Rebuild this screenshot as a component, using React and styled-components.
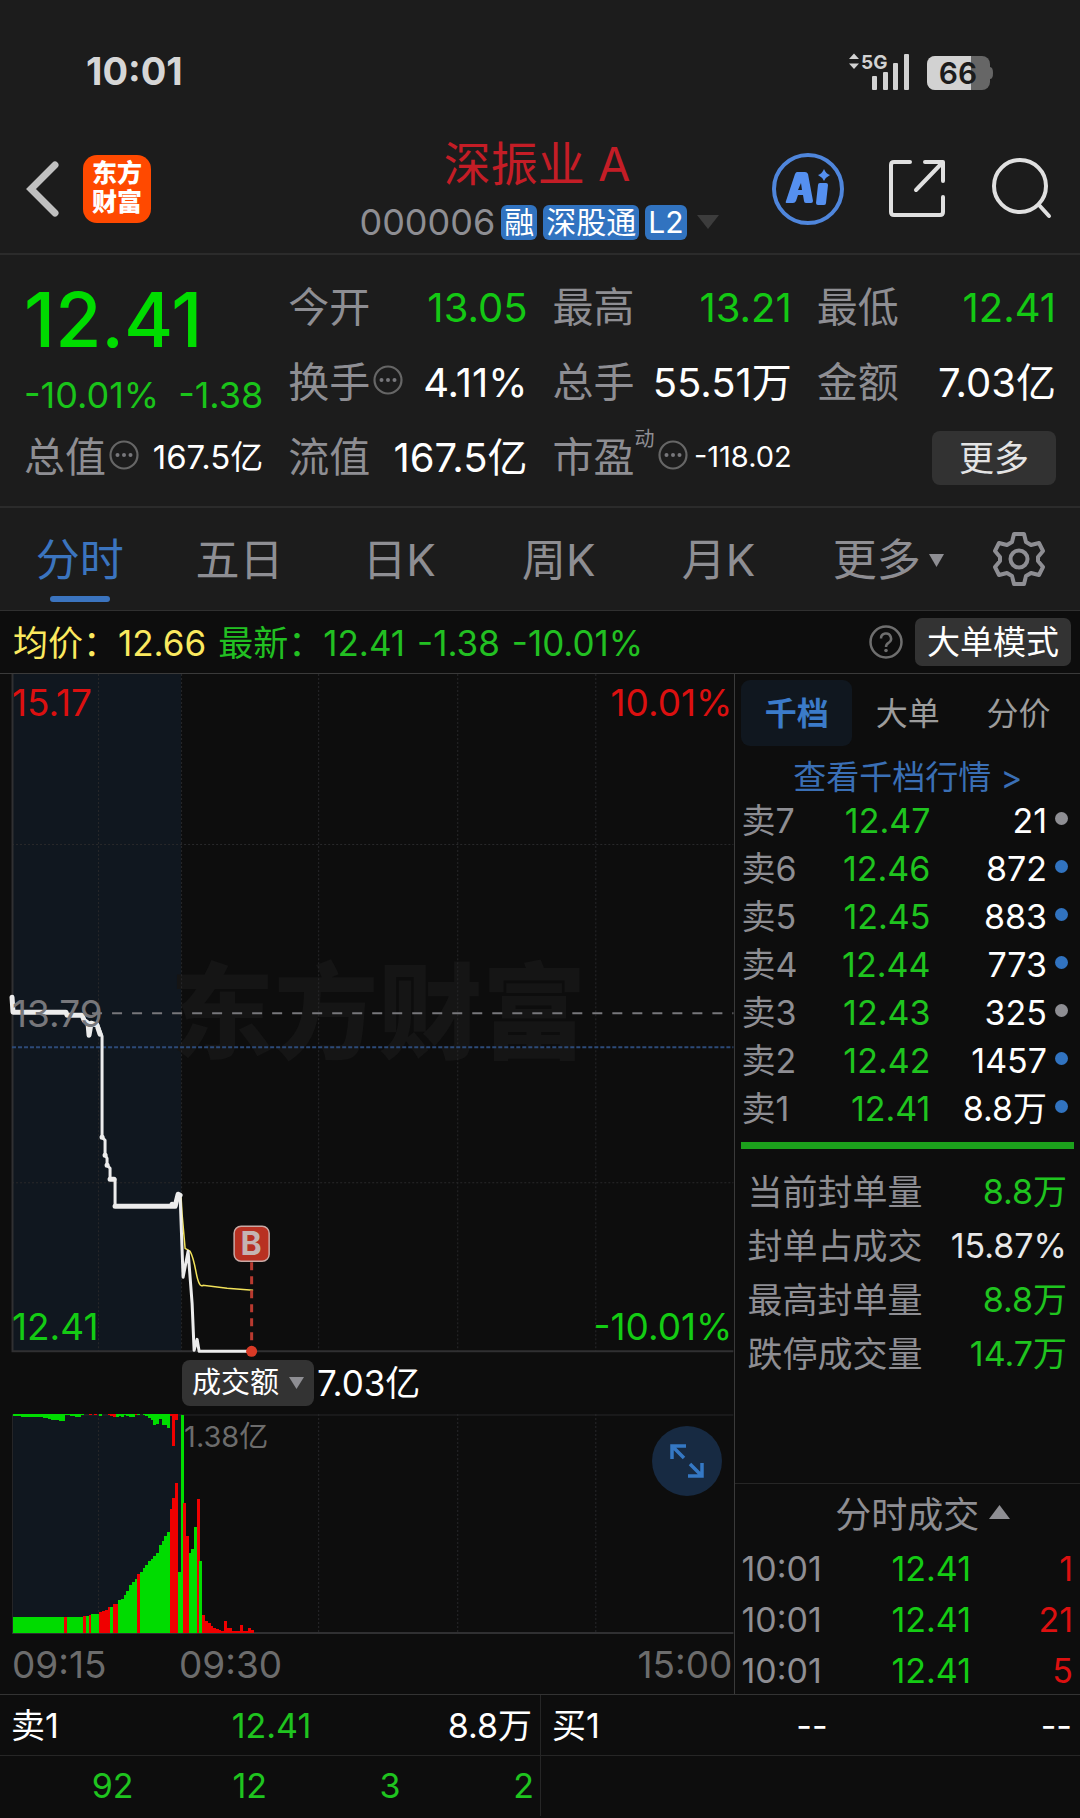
import React, { useState } from "react";
import styled, { createGlobalStyle } from "styled-components";

const asks = [
  { label: "卖7", price: "12.47", qty: "21" },
  { label: "卖6", price: "12.46", qty: "872", big: true },
  { label: "卖5", price: "12.45", qty: "883", big: true },
  { label: "卖4", price: "12.44", qty: "773", big: true },
  { label: "卖3", price: "12.43", qty: "325" },
  { label: "卖2", price: "12.42", qty: "1457", big: true },
  { label: "卖1", price: "12.41", qty: "8.8万", big: true },
];

const stats = [
  { label: "当前封单量", value: "8.8万", color: "#1fc41f" },
  { label: "封单占成交", value: "15.87%", color: "#e8e8e8" },
  { label: "最高封单量", value: "8.8万", color: "#1fc41f" },
  { label: "跌停成交量", value: "14.7万", color: "#1fc41f" },
];

const trades = [
  { time: "10:01", price: "12.41", qty: "1" },
  { time: "10:01", price: "12.41", qty: "21" },
  { time: "10:01", price: "12.41", qty: "5" },
];

// [direction, bar heights]
const volumes = [
  ["down", Array(19).fill(16)],
  ["up", [16]],
  ["down", Array(6).fill(16)],
  ["up", [17]],
  ["down", [17]],
  ["up", [18]],
  ["down", [19, 19, 19]],
  ["up", [21, 22, 23, 26]],
  ["down", [26]],
  ["up", [29, 29]],
  ["down", [33, 34, 38, 42, 48, 51, 54]],
  ["up", [59]],
  ["down", [61, 65, 68, 72, 74, 77, 80, 88, 92, 97, 101]],
  ["up", [124, 135, 150]],
  ["down", [61, 218]],
  ["up", [130, 97]],
  ["down", [80, 84, 106]],
  ["up", [134]],
  ["down", [72]],
  ["up", [18, 12, 10, 7, 5, 4, 3, 2, 12, 5, 5, 2, 2, 2, 8, 2, 2, 5, 3]],
];

const unmatched = [
  ["down", [2, 2, 2, 3, 3, 3, 3, 3, 3, 3, 3, 4, 4, 5, 6, 6, 6, 7, 7]],
  ["down", [1, 1, 2, 2, 3, 3, 1, 0, 0]],
  ["up", [1, 0, 1]],
  ["down", [0, 2, 0, 0]],
  ["up", [1, 2, 3]],
  ["down", [3, 2, 3, 1, 2, 3, 3]],
  ["up", [1]],
  ["down", [1, 0, 1, 2, 4, 6, 11, 10, 5, 11, 11, 14]],
  ["up", [2, 32, 6]],
];

const toBars = (runs) =>
  runs
    .flatMap(([dir, heights]) => heights.map((h) => ({ dir, h })))
    .map((bar, i) => ({ ...bar, x: 13 + i * 2.7 }));

const MoreDots = () => (
  <svg width="30" height="30" viewBox="0 0 30 30" aria-hidden="true">
    <circle cx="15" cy="15" r="13.5" fill="none" stroke="#666" strokeWidth="2.2" />
    <g fill="#77777b">
      <circle cx="8.5" cy="15" r="2" />
      <circle cx="15" cy="15" r="2" />
      <circle cx="21.5" cy="15" r="2" />
    </g>
  </svg>
);

const Triangle = ({ width, height, color, up }) => (
  <svg width={width} height={height} viewBox="0 0 10 10" preserveAspectRatio="none" aria-hidden="true">
    <path d={up ? "M0 10 5 0 10 10Z" : "M0 0H10L5 10Z"} fill={color} />
  </svg>
);

const StatusIcons = () => (
  <svg width="148" height="48" viewBox="0 -4 148 48" role="img" aria-label="5G 66%">
    <g fill="#d2d2d2">
      <path d="M6 1.500 11 7H1ZM6 17 11 11.500H1Z" />
      <text x="13" y="17" fontSize="19" fontWeight="700">5G</text>
      <rect x="24" y="24" width="5" height="14" rx="1" />
      <rect x="35" y="20" width="5" height="18" rx="1" />
      <rect x="45" y="11" width="5" height="27" rx="1" />
      <rect x="56" y="2" width="5" height="36" rx="1" />
    </g>
    <rect x="79" y="4" width="63" height="34" rx="8" fill="#666" />
    <path d="M142 15q3 0 3 6t-3 6Z" fill="#666" />
    <path d="M87 4h36v34H87a8 8 0 0 1-8-8V12a8 8 0 0 1 8-8Z" fill="#d2d2d2" />
    <text x="110" y="32" fontSize="30" fontWeight="600" textAnchor="middle" fill="#1c1c1c">66</text>
  </svg>
);

const PriceChart = () => (
  <ChartSvg viewBox="0 0 734 678" role="img" aria-label="分时走势">
    <rect x="12" y="0" width="169" height="677" fill="#10171f" />
    <text x="170" y="377" fontSize="104" fontWeight="900" fill="#151515">东方财富</text>
    <g stroke="#28282a" strokeDasharray="2 2">
      <path d="M98.500 0V677M181.500 0V677M318.500 0V677M457.500 0V677M595.500 0V677" />
      <path d="M12 170.500H733M12 508.500H733" />
    </g>
    <path d="M12.500 0V677H733" fill="none" stroke="#303032" strokeWidth="2" />
    <path d="M92 339H733" stroke="#77777b" strokeWidth="2" strokeDasharray="10 10" />
    <path d="M12 373H733" stroke="#2c4a78" strokeWidth="2" strokeDasharray="4 2" />
    <path
      d="M181 523 182 540 185 574 190 577Q193 582 196 598T203 611L227 614 253 616"
      fill="none" stroke="#f2e25a" strokeWidth="1.500"
    />
    <g fill="none" stroke="#ececec" strokeLinejoin="round" strokeLinecap="round">
      <path d="M12 323 13 338H66L67 341H82L84 346 88 349 89 361 91 349 97 351 100 360" strokeWidth="5" />
      <path d="M97 349 102 362V463L105 466V481L107 484V491L110 494V505H115V532" strokeWidth="3" />
      <path d="M115 532H175L178 520 180 521" strokeWidth="5" />
      <path d="M102 463h.1M105 481h.1M107 491h.1M110 505h4M172 530h.1" strokeWidth="5" />
      <path d="M180 521 183 603 188 577 192 629 194 676 197 665 199 677H251" strokeWidth="3" />
    </g>
    <path d="M251.500 588V677" stroke="#b83a30" strokeWidth="3" strokeDasharray="8 6" />
    <circle cx="251.500" cy="677" r="5.500" fill="#d93a26" />
    <rect x="234" y="552" width="35" height="35" rx="7" fill="#b83122" stroke="#c9a9a5" strokeWidth="1.500" />
    <text x="251" y="581" fontSize="32" fontWeight="700" textAnchor="middle" fill="#c4b4b2">B</text>
    <g fontSize="37">
      <text x="12" y="42" fill="#dc1010">15.17</text>
      <text x="732" y="42" fill="#dc1010" textAnchor="end">10.01%</text>
      <text x="12" y="353" fill="#77777b">13.79</text>
      <text x="12" y="666" fill="#14cc14">12.41</text>
      <text x="732" y="666" fill="#14cc14" textAnchor="end">-10.01%</text>
    </g>
  </ChartSvg>
);

const VolumeChart = () => (
  <ChartSvg viewBox="0 0 734 220" role="img" aria-label="成交额">
    <rect x="12" y="0" width="169" height="219" fill="#10171f" />
    <path
      d="M98.500 0V219M181.500 0V219M318.500 0V219M457.500 0V219M595.500 0V219"
      stroke="#28282a" strokeDasharray="2 2"
    />
    <path d="M12.500 219V1H733" fill="none" stroke="#262628" />
    <path d="M12 219H733" stroke="#303032" strokeWidth="2" />
    <g shapeRendering="crispEdges">
      {toBars(volumes).map((bar) => (
        <rect key={bar.x} x={bar.x} y={219 - bar.h} width="3" height={bar.h} fill={bar.dir === "up" ? "#f00000" : "#00dc00"} />
      ))}
      {toBars(unmatched).map((bar) => (
        <rect key={bar.x} x={bar.x} y="0" width="3" height={bar.h} fill={bar.dir === "up" ? "#f00000" : "#00dc00"} />
      ))}
    </g>
    <text x="184" y="33" fontSize="29" fill="#6c6c6c">1.38亿</text>
  </ChartSvg>
);

const periods = ["分时", "五日", "日K", "周K", "月K"];

function App() {
  const [period, setPeriod] = useState("分时");
  const [book, setBook] = useState("千档");

  return (
    <Page>
      <GlobalStyle />
      <StatusBar>
        <Clock>10:01</Clock>
        <StatusIcons />
      </StatusBar>

      <Header>
        <HeaderSide>
          <IconButton aria-label="返回">
            <svg width="34" height="56" viewBox="0 0 34 56">
              <path d="M29 4 5 28 29 52" fill="none" stroke="#c0c0c0" strokeWidth="7" strokeLinecap="round" />
            </svg>
          </IconButton>
          <Logo>东方财富</Logo>
        </HeaderSide>
        <TitleBlock>
          <Title>深振业 A</Title>
          <SubTitle>
            <span>000006</span>
            <Badge>融</Badge>
            <Badge>深股通</Badge>
            <Badge>L2</Badge>
            <Triangle width="22" height="14" color="#3c3c3c" />
          </SubTitle>
        </TitleBlock>
        <HeaderSide $end>
          <IconButton aria-label="AI">
            <svg width="72" height="72" viewBox="0 0 72 72">
              <circle cx="36" cy="36" r="34" fill="none" stroke="#4f86dc" strokeWidth="4" />
              <path
                d="M25 19h8q2 0 3 2l5 27q0 2-2 2h-5q-2 0-2-2l-1-6h-5l-2 6q-1 2-3 2h-6q-2 0-1-2l9-27q1-2 2-2Zm4 11-3 7h4l-1-7Z"
                fill="#5590f0" fillRule="evenodd"
              />
              <path d="M48 30h6q2 0 2 2l-2 18q0 2-2 2h-6q-2 0-2-2l2-18q0-2 2-2Z" fill="#5590f0" />
              <path d="M52 16q2 5 6 6-4 2-6 6-2-4-6-6 4-1 6-6Z" fill="#5590f0" />
            </svg>
          </IconButton>
          <IconButton aria-label="分享">
            <svg width="60" height="60" viewBox="0 0 60 60">
              <g fill="none" stroke="#e0e0e0" strokeWidth="4" strokeLinecap="round" strokeLinejoin="round">
                <path d="M22 3H6Q3 3 3 6V53Q3 56 6 56H52Q55 56 55 53V38" />
                <path d="M37 3H55V22M54 4 28 31" />
              </g>
            </svg>
          </IconButton>
          <IconButton aria-label="搜索">
            <svg width="60" height="62" viewBox="0 0 60 62">
              <g fill="none" stroke="#e0e0e0" strokeWidth="4" strokeLinecap="round">
                <circle cx="28" cy="28" r="26" />
                <path d="M47 47 57 58" />
              </g>
            </svg>
          </IconButton>
        </HeaderSide>
      </Header>

      <Quote>
        <PriceBlock>
          <BigPrice>12.41</BigPrice>
          <Change>
            <span>-10.01%</span>
            <span>-1.38</span>
          </Change>
        </PriceBlock>
        <Cell><Label>今开</Label><Value $color="#14c814">13.05</Value></Cell>
        <Cell><Label>最高</Label><Value $color="#14c814">13.21</Value></Cell>
        <Cell><Label>最低</Label><Value $color="#14c814">12.41</Value></Cell>
        <Cell><Label>换手<MoreDots /></Label><Value>4.11%</Value></Cell>
        <Cell><Label>总手</Label><Value>55.51万</Value></Cell>
        <Cell><Label>金额</Label><Value>7.03亿</Value></Cell>
        <Cell><Label>总值<MoreDots /></Label><Value $size={33}>167.5亿</Value></Cell>
        <Cell><Label>流值</Label><Value>167.5亿</Value></Cell>
        <Cell><Label>市盈<Sup>动</Sup><MoreDots /></Label><Value $size={29}>-118.02</Value></Cell>
        <Cell $end><MoreButton>更多</MoreButton></Cell>
      </Quote>

      <Tabs>
        {periods.map((name) => (
          <Tab key={name} $active={name === period} onClick={() => setPeriod(name)}>
            {name}
          </Tab>
        ))}
        <MoreTab>
          更多
          <Triangle width="15" height="13" color="#8e8e93" />
        </MoreTab>
        <GearButton aria-label="设置">
          <svg width="52" height="54" viewBox="0 0 52 54">
            <g fill="none" stroke="#8e8e93" strokeWidth="4" strokeLinejoin="round">
              <path d="M21 2H31L33 10 38 13 46 11 50 19 45 25V29L50 35 46 43 38 41 33 44 31 52H21L19 44 14 41 6 43 2 35 7 29V25L2 19 6 11 14 13 19 10Z" />
              <circle cx="26" cy="27" r="8.500" />
            </g>
          </svg>
        </GearButton>
      </Tabs>

      <InfoStrip>
        <Info $color="#fbe95f">均价：<b>12.66</b></Info>
        <Info $color="#22c022">最新：<b>12.41</b></Info>
        <Info $color="#22c022"><b>-1.38</b></Info>
        <Info $color="#22c022"><b>-10.01%</b></Info>
        <StripActions>
          <IconButton aria-label="帮助">
            <svg width="34" height="34" viewBox="0 0 34 34">
              <circle cx="17" cy="17" r="15.500" fill="none" stroke="#6e6e6e" strokeWidth="2.500" />
              <path d="M12 13.500a5 5 0 1 1 7.500 4.300Q17 19.300 17 22" fill="none" stroke="#6e6e6e" strokeWidth="2.500" />
              <circle cx="17" cy="25.500" r="1.800" fill="#6e6e6e" />
            </svg>
          </IconButton>
          <ModeButton>大单模式</ModeButton>
        </StripActions>
      </InfoStrip>

      <Main>
        <Charts>
          <PriceChart />
          <VolumeHead>
            <VolumeButton>
              成交额
              <Triangle width="15" height="12" color="#8e8e93" />
            </VolumeButton>
            <span>7.03亿</span>
          </VolumeHead>
          <VolumeWrap>
            <VolumeChart />
            <ExpandButton aria-label="全屏">
              <svg width="34" height="34" viewBox="0 0 34 34">
                <path d="M2 15V2H16M2 2 14 14M32 19V32H18M32 32 20 20" fill="none" stroke="#3578c4" strokeWidth="3.500" />
              </svg>
            </ExpandButton>
          </VolumeWrap>
          <TimeAxis>
            <span>09:15</span>
            <span>09:30</span>
            <span>15:00</span>
          </TimeAxis>
        </Charts>

        <Side>
          <BookTabs>
            {["千档", "大单", "分价"].map((name) => (
              <BookTab key={name} $active={name === book} onClick={() => setBook(name)}>
                {name}
              </BookTab>
            ))}
          </BookTabs>
          <BookLink href="#book">查看千档行情 &gt;</BookLink>
          <AskTable>
            <tbody>
              {asks.map((row) => (
                <tr key={row.label}>
                  <th scope="row">{row.label}</th>
                  <td>{row.price}</td>
                  <td>{row.qty}</td>
                  <td><Dot $big={row.big} /></td>
                </tr>
              ))}
            </tbody>
          </AskTable>
          <Ratio />
          <Stats>
            {stats.map((row) => (
              <StatRow key={row.label}>
                <dt>{row.label}</dt>
                <StatValue $color={row.color}>{row.value}</StatValue>
              </StatRow>
            ))}
          </Stats>
          <TradesHead>
            分时成交
            <Triangle width="21" height="14" color="#8e8e93" up />
          </TradesHead>
          <TradeTable>
            <tbody>
              {trades.map((row, index) => (
                <tr key={index}>
                  <td>{row.time}</td>
                  <td>{row.price}</td>
                  <td>{row.qty}</td>
                </tr>
              ))}
            </tbody>
          </TradeTable>
        </Side>
      </Main>

      <Footer>
        <Half>
          <BestRow>
            <span>卖1</span>
            <Green>12.41</Green>
            <span>8.8万</span>
          </BestRow>
          <QueueRow>
            <span>92</span>
            <span>12</span>
            <span>3</span>
            <span>2</span>
          </QueueRow>
        </Half>
        <Half>
          <BestRow>
            <span>买1</span>
            <span>--</span>
            <span>--</span>
          </BestRow>
          <QueueRow />
        </Half>
      </Footer>
    </Page>
  );
}

const GlobalStyle = createGlobalStyle`
  * {
    box-sizing: border-box;
  }
  body {
    margin: 0;
    background: #0d0d0d;
    font-family: Inter, "Noto Sans CJK SC", sans-serif;
    line-height: 1.2;
  }
  button {
    border: 0;
    padding: 0;
    background: none;
    color: inherit;
    font: inherit;
    cursor: pointer;
  }
  svg {
    display: block;
    flex-shrink: 0;
  }
  table {
    border-collapse: collapse;
  }
`;

const Page = styled.div`
  color: #fff;
  background: #1c1c1c;
  white-space: nowrap;
`;

const StatusBar = styled.div`
  display: flex;
  align-items: center;
  justify-content: space-between;
  height: 126px;
  padding: 18px 84px 0 86px;
`;

const Clock = styled.span`
  font-size: 38px;
  font-weight: 700;
  color: #d6d6d6;
`;

const Header = styled.header`
  display: grid;
  grid-template-columns: 1fr auto 1fr;
  align-items: center;
  height: 129px;
  padding: 0 28px 4px 26px;
  border-bottom: 2px solid #2b2b2b;
`;

const HeaderSide = styled.div`
  display: flex;
  align-items: center;
  justify-content: ${({ $end }) => ($end ? "flex-end" : "flex-start")};
  gap: ${({ $end }) => ($end ? "44px" : "23px")};
`;

const IconButton = styled.button`
  display: flex;
`;

const Logo = styled.div`
  width: 68px;
  height: 68px;
  padding: 4px 9px;
  border-radius: 14px;
  background: #ff4900;
  font-size: 25px;
  font-weight: 900;
  line-height: 29px;
  white-space: normal;
`;

const TitleBlock = styled.div`
  padding-top: 9px;
  text-align: center;
`;

const Title = styled.h1`
  margin: 0;
  padding-right: 4px;
  font-size: 47px;
  font-weight: 400;
  line-height: 58px;
  color: #c41d26;
`;

const SubTitle = styled.div`
  display: flex;
  align-items: center;
  gap: 6px;
  font-size: 36px;
  line-height: 58px;
  color: #8e8e93;

  svg {
    margin-left: 4px;
  }
`;

const Badge = styled.span`
  padding: 0 3px;
  border-radius: 6px;
  background: #3173c0;
  color: #fff;
  font-size: 30px;
  line-height: 35px;
`;

const Quote = styled.section`
  display: grid;
  grid-template-columns: repeat(4, minmax(0, 1fr));
  grid-auto-rows: 75px;
  column-gap: 25px;
  padding: 15px 24px 11px;
  border-bottom: 2px solid #2b2b2b;
`;

const PriceBlock = styled.div`
  grid-row: span 2;
  color: #00dc00;
`;

const BigPrice = styled.div`
  font-size: 75px;
  font-weight: 500;
  line-height: 100px;
`;

const Change = styled.div`
  display: flex;
  justify-content: space-between;
  font-size: 36px;
  line-height: 50px;
  color: #1ac41a;
`;

const Cell = styled.div`
  display: flex;
  align-items: center;
  justify-content: ${({ $end }) => ($end ? "flex-end" : "space-between")};
`;

const Label = styled.span`
  display: flex;
  align-items: center;
  font-size: 41px;
  color: #8e8e93;

  svg {
    margin: 0 0 6px 3px;
  }
`;

const Sup = styled.sup`
  align-self: flex-start;
  font-size: 20px;
  line-height: 12px;
`;

const Value = styled.span`
  font-size: ${({ $size }) => $size || 40}px;
  color: ${({ $color }) => $color || "#fff"};
`;

const MoreButton = styled.button`
  width: 124px;
  border-radius: 8px;
  background: #323232;
  color: #e4e4e4;
  font-size: 35px;
  line-height: 54px;
`;

const Tabs = styled.nav`
  display: grid;
  grid-template-columns: repeat(6, minmax(0, 1fr)) 122px;
  height: 103px;
  border-bottom: 1px solid #303030;
`;

const Tab = styled.button`
  position: relative;
  display: flex;
  align-items: center;
  justify-content: center;
  padding-top: 3px;
  font-size: 44px;
  color: ${({ $active }) => ($active ? "#3b74bf" : "#8e8e93")};

  &::after {
    content: "";
    display: ${({ $active }) => ($active ? "block" : "none")};
    position: absolute;
    bottom: 8px;
    width: 60px;
    height: 6px;
    border-radius: 3px;
    background: #3b74bf;
  }
`;

const MoreTab = styled(Tab)`
  gap: 8px;
  padding-left: 20px;
`;

const GearButton = styled.button`
  display: flex;
  align-items: center;
  justify-content: center;
`;

const InfoStrip = styled.div`
  display: flex;
  align-items: center;
  height: 63px;
  padding: 0 9px 0 13px;
  border-bottom: 1px solid #3a3a3a;
  background: #0d0d0d;
`;

const Info = styled.span`
  margin-right: 12px;
  padding-top: 2px;
  font-size: 35px;
  color: ${({ $color }) => $color};

  b {
    font-weight: 400;
  }
`;

const StripActions = styled.div`
  display: flex;
  align-items: center;
  gap: 12px;
  margin-left: auto;
`;

const ModeButton = styled.button`
  width: 156px;
  border-radius: 7px;
  background: #333;
  font-size: 33px;
  line-height: 48px;
`;

const Main = styled.main`
  display: grid;
  grid-template-columns: 68fr 32fr;
  background: #0d0d0d;
`;

const Charts = styled.section`
  min-width: 0;
`;

const ChartSvg = styled.svg`
  width: 100%;
  height: auto;
  overflow: visible;
`;

const VolumeHead = styled.div`
  display: flex;
  align-items: center;
  gap: 3px;
  height: 62px;
  padding-left: 182px;
  font-size: 35px;
`;

const VolumeButton = styled.button`
  display: flex;
  align-items: center;
  gap: 10px;
  padding: 0 10px;
  border-radius: 8px;
  background: #333;
  font-size: 29px;
  line-height: 46px;
`;

const VolumeWrap = styled.div`
  position: relative;
`;

const ExpandButton = styled.button`
  position: absolute;
  top: 12px;
  right: 12px;
  display: flex;
  align-items: center;
  justify-content: center;
  width: 70px;
  height: 70px;
  border-radius: 50%;
  background: #172a42;
`;

const TimeAxis = styled.div`
  display: grid;
  grid-template-columns: 167px auto 1fr;
  height: 60px;
  padding: 0 2px 0 12px;
  font-size: 37px;
  line-height: 62px;
  color: #6c6c6c;

  span:last-child {
    text-align: right;
  }
`;

const Side = styled.aside`
  display: flex;
  flex-direction: column;
  min-width: 0;
  border-left: 1px solid #3a3a3a;
`;

const BookTabs = styled.div`
  display: flex;
  padding: 6px 6px 0;
`;

const BookTab = styled.button`
  flex: 1;
  padding-top: 2px;
  border-radius: 9px;
  background: ${({ $active }) => ($active ? "#10171f" : "none")};
  color: ${({ $active }) => ($active ? "#3b7bc9" : "#9c9c9c")};
  font-size: 32px;
  font-weight: ${({ $active }) => ($active ? 700 : 400)};
  line-height: 64px;
`;

const BookLink = styled.a`
  color: #3a6fb5;
  font-size: 33px;
  line-height: 50px;
  padding-top: 6px;
  text-align: center;
  text-decoration: none;
`;

const AskTable = styled.table`
  margin: -5px 12px 0 6px;
  font-size: 34px;
  line-height: 48px;

  th,
  td {
    height: 48px;
    padding: 0;
    text-align: right;
  }
  th {
    width: 60px;
    color: #8e8e93;
    font-weight: 400;
    text-align: left;
  }
  td:nth-child(2) {
    width: 129px;
    color: #1fc41f;
  }
  td:last-child {
    width: 21px;
  }
`;

const Dot = styled.i`
  display: block;
  width: 13px;
  height: 13px;
  margin: 0 0 6px auto;
  border-radius: 50%;
  background: ${({ $big }) => ($big ? "#3173c0" : "#8e8e93")};
`;

const Ratio = styled.div`
  height: 7px;
  margin: 9px 6px 0;
  background: #1ca01c;
`;

const Stats = styled.dl`
  flex: 1;
  margin: 16px 13px 0 12px;
`;

const StatRow = styled.div`
  display: flex;
  align-items: center;
  justify-content: space-between;
  height: 54px;
  font-size: 35px;
  color: #8e8e93;
`;

const StatValue = styled.dd`
  margin: 0;
  font-size: 34px;
  color: ${({ $color }) => $color};
`;

const TradesHead = styled.div`
  display: flex;
  align-items: center;
  justify-content: center;
  gap: 10px;
  height: 60px;
  padding: 3px 0 0 30px;
  border-top: 1px solid #262626;
  font-size: 36px;
  color: #8e8e93;

  svg {
    margin-bottom: 6px;
  }
`;

const TradeTable = styled.table`
  margin: 0 7px -2px 6px;
  font-size: 34px;
  line-height: 51px;

  td {
    height: 51px;
    padding: 0;
    color: #8e8e93;
  }
  td:nth-child(2) {
    color: #14cc14;
    text-align: right;
  }
  td:last-child {
    width: 102px;
    color: #dc1010;
    text-align: right;
  }
`;

const Footer = styled.footer`
  display: grid;
  grid-template-columns: 1fr 1fr;
  background: #0d0d0d;
  border-top: 1px solid #333;
  font-size: 34px;
`;

const Half = styled.div`
  & + & {
    border-left: 1px solid #262626;
  }
`;

const BestRow = styled.div`
  display: grid;
  grid-template-columns: 1fr auto 1fr;
  align-items: center;
  height: 61px;
  padding: 2px 8px 0 11px;
  border-bottom: 1px solid #262626;

  span:last-child {
    text-align: right;
  }
`;

const Green = styled.span`
  color: #1fc41f;
`;

const QueueRow = styled.div`
  display: grid;
  grid-template-columns: repeat(4, 1fr);
  align-items: center;
  height: 60px;
  padding-right: 6px;
  color: #1fc41f;
  text-align: right;
`;

export default App;
